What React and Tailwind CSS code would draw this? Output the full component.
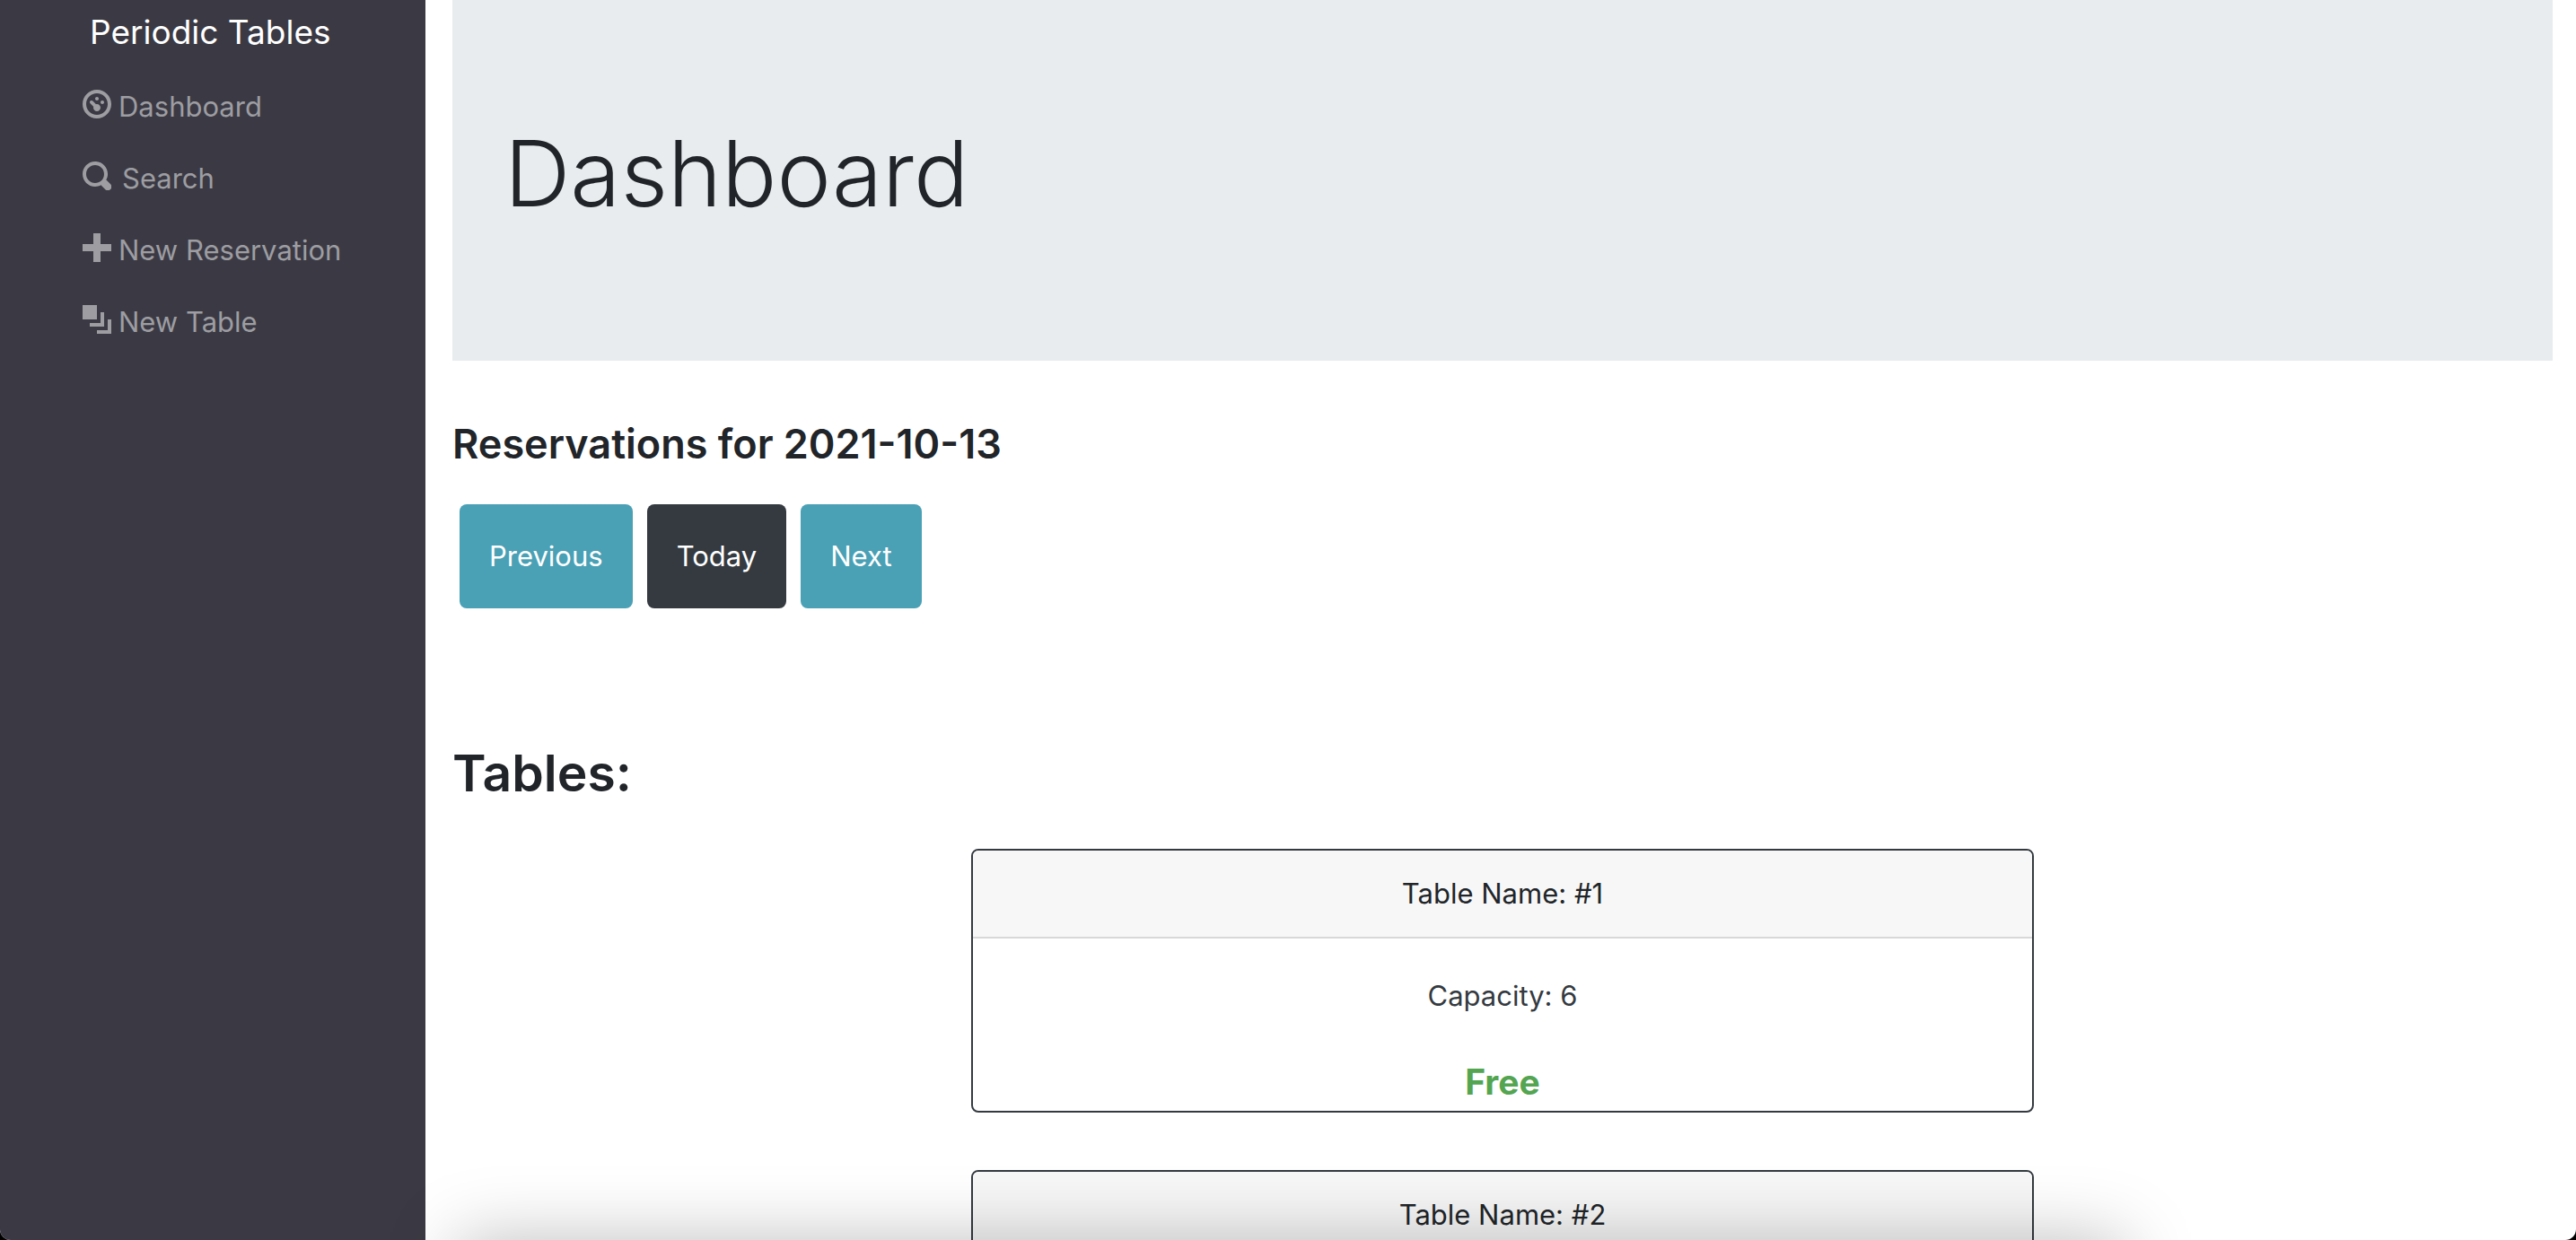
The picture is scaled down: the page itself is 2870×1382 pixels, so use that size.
import React from "react";

const icons = {
  dashboard:
    "M4 0c-2.2 0-4 1.8-4 4s1.8 4 4 4 4-1.8 4-4-1.8-4-4-4zm0 1c1.66 0 3 1.34 3 3s-1.34 3-3 3-3-1.34-3-3 1.34-3 3-3zm0 1c-.28 0-.5.22-.5.5s.22.5.5.5.5-.22.5-.5-.22-.5-.5-.5zm-1.66 1a.5.5 0 0 0-.19.84l.91.91c-.02.08-.06.16-.06.25 0 .55.45 1 1 1s1-.45 1-1-.45-1-1-1c-.09 0-.17.04-.25.06l-.91-.91a.5.5 0 0 0-.44-.16.5.5 0 0 0-.06 0zm3.16 0c-.28 0-.5.22-.5.5s.22.5.5.5.5-.22.5-.5-.22-.5-.5-.5z",
  search:
    "M3.5 0c-1.93 0-3.5 1.57-3.5 3.5s1.57 3.5 3.5 3.5c.59 0 1.17-.14 1.66-.41a1 1 0 0 0 .13.13l1 1a1.02 1.02 0 1 0 1.44-1.44l-1-1a1 1 0 0 0-.16-.13c.27-.49.44-1.06.44-1.66 0-1.93-1.55-3.5-3.5-3.5zm0 1c1.39 0 2.5 1.1 2.5 2.5 0 .66-.24 1.27-.66 1.72-.01.01-.02.02-.03.03a1 1 0 0 0-.13.13c-.44.4-1.04.63-1.69.63-1.39 0-2.5-1.1-2.5-2.5s1.1-2.5 2.5-2.5z",
  plus: "M3 0v3h-3v2h3v3h2v-3h3v-2h-3v-3h-2z",
  layers:
    "M0 0v4h4v-4h-4zm5 2v3h-3v1h4v-4h-1zm2 2v3h-3v1h4v-4h-1z",
};

const links = [
  { icon: "dashboard", label: "Dashboard" },
  { icon: "search", label: "Search", wide: true },
  { icon: "plus", label: "New Reservation" },
  { icon: "layers", label: "New Table" },
];

const tables = [
  { name: "#1", capacity: 6, status: "Free" },
  { name: "#2" },
];

function Icon({ name }) {
  return (
    <svg viewBox="0 0 8 8" className="mb-1.5 size-8 shrink-0" fill="currentColor" aria-hidden="true">
      <path d={icons[name]} />
    </svg>
  );
}

function Sidebar() {
  return (
    <nav className="w-[474px] shrink-0 bg-[#3b3a44] pt-1.5">
      <a href="#home" className="block pl-[100px] text-[37px] leading-[60px] text-white">
        Periodic Tables
      </a>
      <ul className="pt-[13px]">
        {links.map((link) => (
          <li key={link.label}>
            <a
              href={"#" + link.icon}
              className={
                "flex items-center py-4 pl-[92px] text-[31px] leading-[48px] text-[#9d9da2] " +
                (link.wide ? "gap-3" : "gap-2")
              }
            >
              <Icon name={link.icon} />
              {link.label}
            </a>
          </li>
        ))}
      </ul>
    </nav>
  );
}

function DayButton({ dark, children }) {
  return (
    <button
      type="button"
      className={
        "rounded-lg px-[33px] py-[34px] text-[31px] leading-[48px] text-white " +
        (dark ? "bg-[#343a40]" : "bg-[#4aa0b5]")
      }
    >
      {children}
    </button>
  );
}

function TableCard({ table }) {
  return (
    <article className="mx-auto w-full max-w-[1184px] rounded-lg border-2 border-[#343a40] text-center">
      <h3 className="rounded-t-md border-b-2 border-[#d8d8d8] bg-[#f7f7f7] py-6 text-[31px] leading-[48px]">
        Table Name: {table.name}
      </h3>
      {table.capacity && (
        <p className="pt-10 text-[31px] leading-[48px] text-[#343a40]">Capacity: {table.capacity}</p>
      )}
      {table.status && (
        <p className="pt-[42px] pb-0.5 text-[39px] leading-[60px] font-bold text-[#53a551]">{table.status}</p>
      )}
    </article>
  );
}

export default function App() {
  return (
    <div className="h-screen bg-black">
      <div className="relative flex h-full overflow-hidden rounded-b-xl bg-white font-[Inter,sans-serif] text-[#212529]">
        <Sidebar />
        <main className="min-w-0 flex-1 overflow-y-auto pr-[26px] pl-[30px] [scrollbar-width:none]">
          <header className="bg-[#e8ecef] px-[58px] pt-[126px] pb-[142px]">
            <h1 className="text-[102px] leading-[134px] font-[350]">Dashboard</h1>
          </header>
          <h2 className="pt-16 text-[45px] leading-[58px] font-semibold">Reservations for 2021-10-13</h2>
          <div className="flex gap-4 pt-[38px] pl-2">
            <DayButton>Previous</DayButton>
            <DayButton dark>Today</DayButton>
            <DayButton>Next</DayButton>
          </div>
          <h2 className="pt-[146px] text-[57px] leading-[76px] font-semibold">Tables:</h2>
          <div className="flex flex-col gap-16 pt-[46px] pb-12">
            {tables.map((table) => (
              <TableCard key={table.name} table={table} />
            ))}
          </div>
        </main>
        <div className="pointer-events-none absolute top-full right-[504px] left-[510px] h-40 shadow-[0_0_80px_rgba(0,0,0,0.26)]" />
      </div>
    </div>
  );
}
